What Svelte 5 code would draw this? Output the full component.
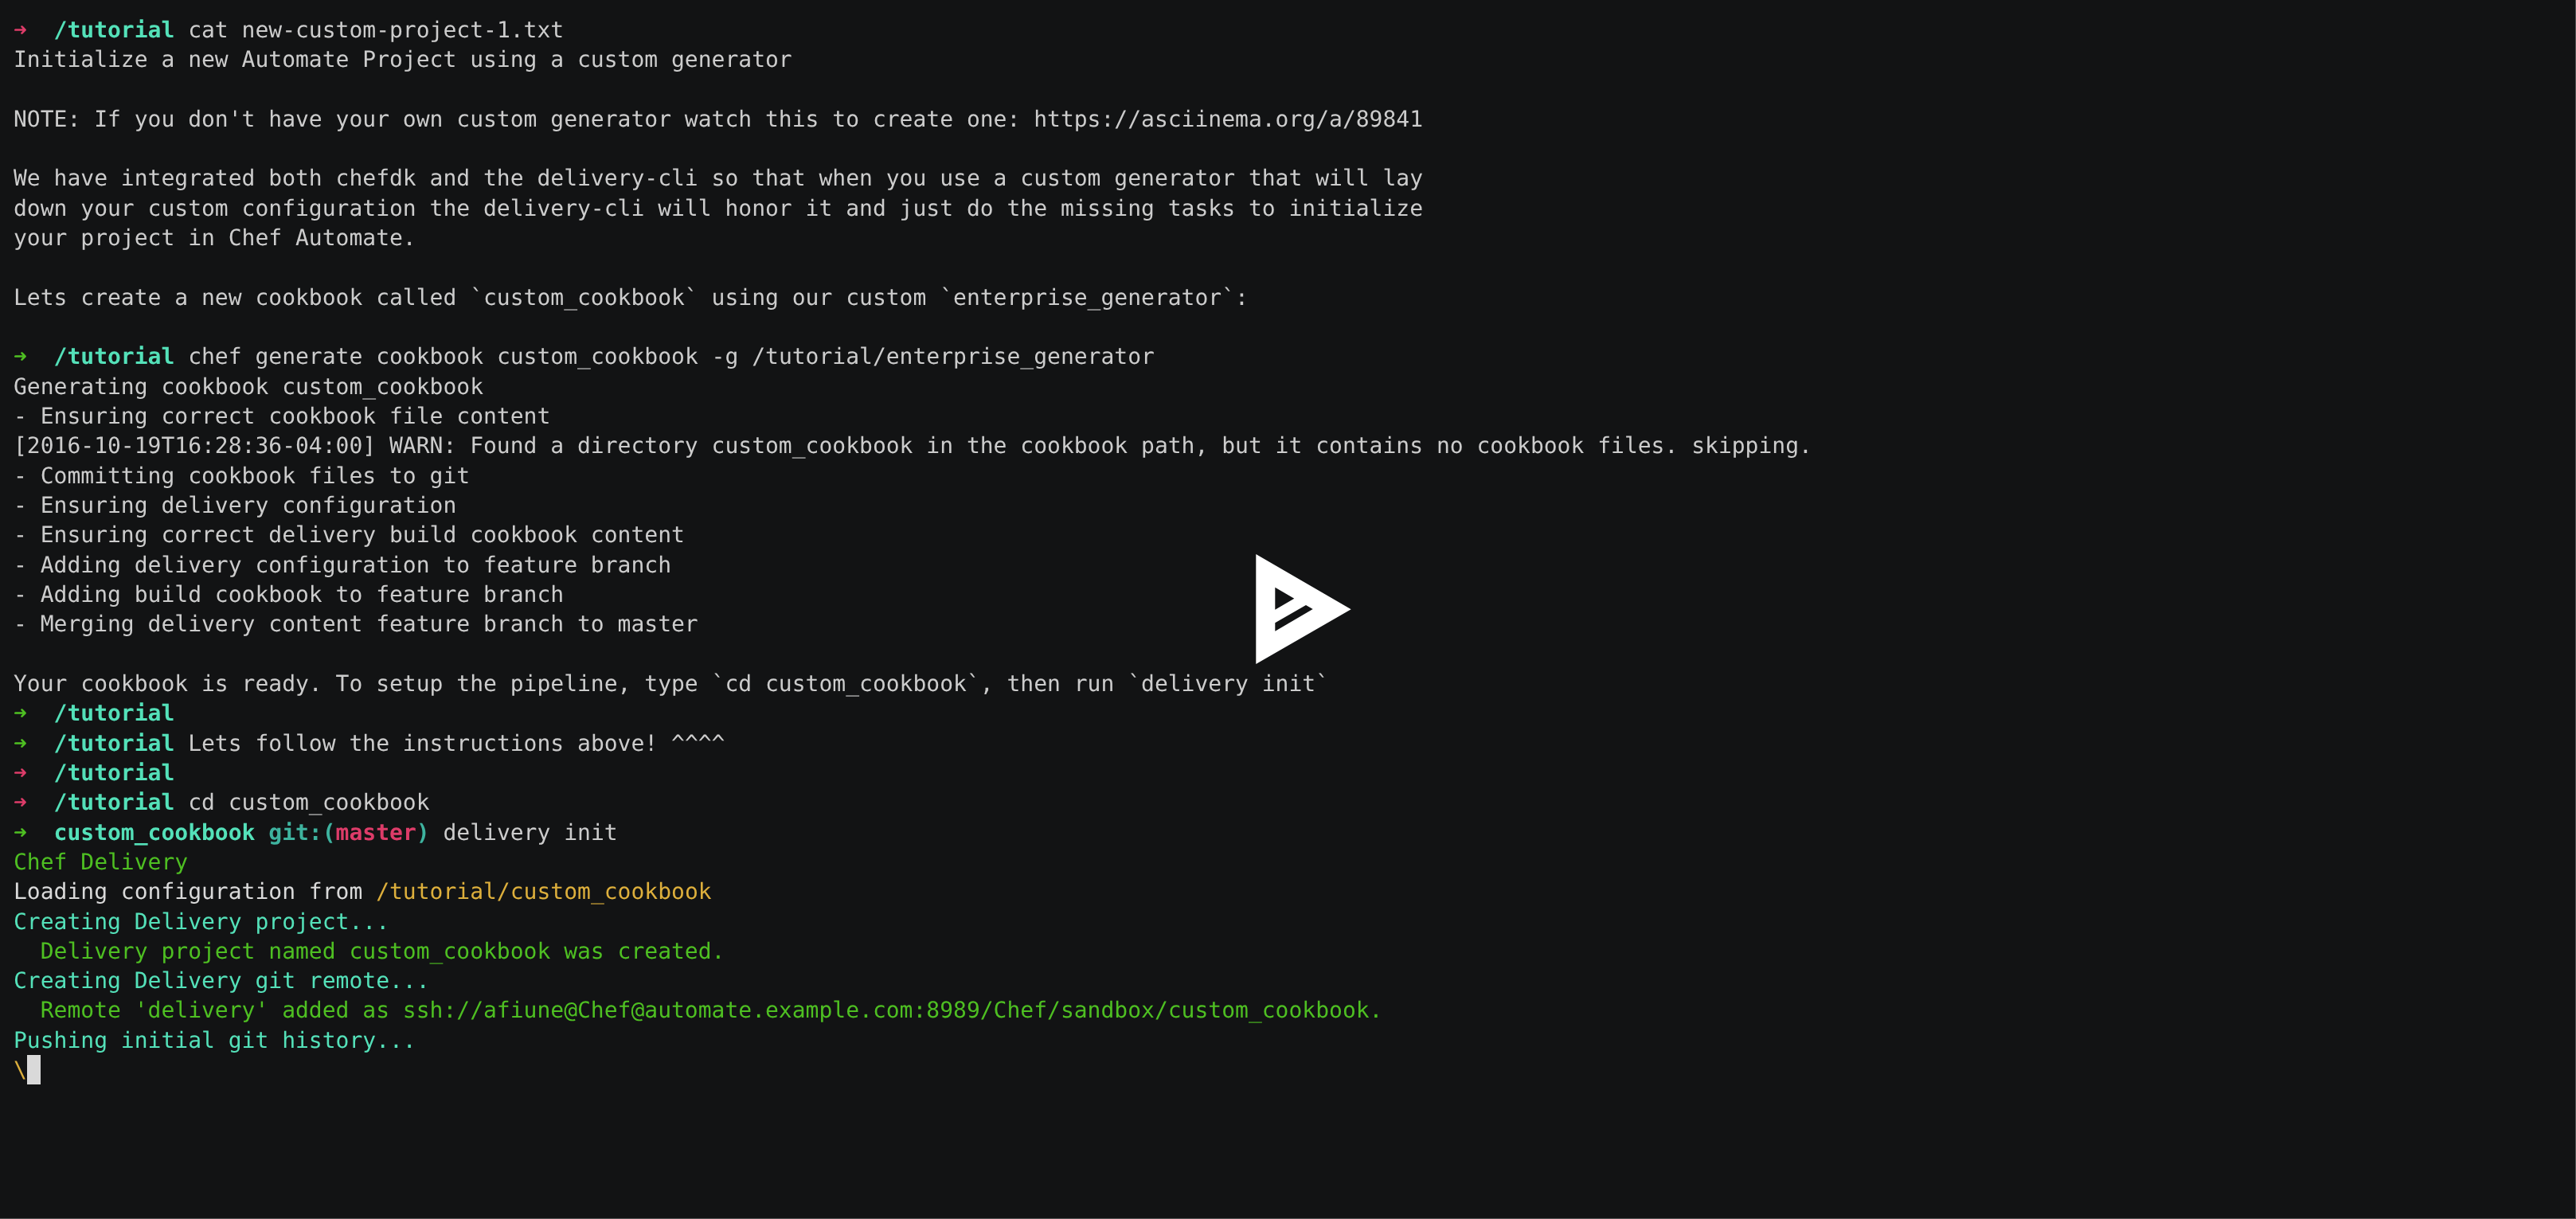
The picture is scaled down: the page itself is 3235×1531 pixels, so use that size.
<script>
  const cyan = 'c';
  const prompt = (ok, rest) => [
    [ok ? 'arrow-ok' : 'arrow-bad', '➜  '],
    ['path', '/tutorial'],
    ['', rest ? ' ' + rest : ''],
  ];
  const txt = (s) => [['', s]];

  const lines = [
    prompt(false, 'cat new-custom-project-1.txt'),
    txt('Initialize a new Automate Project using a custom generator'),
    txt(''),
    txt("NOTE: If you don't have your own custom generator watch this to create one: https://asciinema.org/a/89841"),
    txt(''),
    txt('We have integrated both chefdk and the delivery-cli so that when you use a custom generator that will lay'),
    txt('down your custom configuration the delivery-cli will honor it and just do the missing tasks to initialize'),
    txt('your project in Chef Automate.'),
    txt(''),
    txt('Lets create a new cookbook called `custom_cookbook` using our custom `enterprise_generator`:'),
    txt(''),
    prompt(true, 'chef generate cookbook custom_cookbook -g /tutorial/enterprise_generator'),
    txt('Generating cookbook custom_cookbook'),
    txt('- Ensuring correct cookbook file content'),
    txt('[2016-10-19T16:28:36-04:00] WARN: Found a directory custom_cookbook in the cookbook path, but it contains no cookbook files. skipping.'),
    txt('- Committing cookbook files to git'),
    txt('- Ensuring delivery configuration'),
    txt('- Ensuring correct delivery build cookbook content'),
    txt('- Adding delivery configuration to feature branch'),
    txt('- Adding build cookbook to feature branch'),
    txt('- Merging delivery content feature branch to master'),
    txt(''),
    txt('Your cookbook is ready. To setup the pipeline, type `cd custom_cookbook`, then run `delivery init`'),
    prompt(true, ''),
    prompt(true, 'Lets follow the instructions above! ^^^^'),
    prompt(false, ''),
    prompt(false, 'cd custom_cookbook'),
    [
      ['arrow-ok', '➜  '],
      ['path', 'custom_cookbook '],
      ['git', 'git:('],
      ['branch', 'master'],
      ['git', ')'],
      ['', ' delivery init'],
    ],
    [['green', 'Chef Delivery']],
    [['white', 'Loading configuration from '], ['yellow', '/tutorial/custom_cookbook']],
    [[cyan, 'Creating Delivery project...']],
    [['green', '  Delivery project named custom_cookbook was created.']],
    [[cyan, 'Creating Delivery git remote...']],
    [['green', "  Remote 'delivery' added as ssh://afiune@Chef@automate.example.com:8989/Chef/sandbox/custom_cookbook."]],
    [[cyan, 'Pushing initial git history...']],
    [['yellow', '\\'], ['cursor', ' ']],
  ];
</script>

<div class="player">
  <div class="term">
    {#each lines as line}
      <div class="line">{#each line as [cls, text]}<span class={cls}>{text}</span>{/each}</div>
    {/each}
  </div>
  <svg class="play" viewBox="1577 696 120 138" aria-label="Play">
    <path
      fill-rule="evenodd"
      d="M1577.3 696 L1696.7 765.3 L1577.3 834 Z M1601.3 737.7 L1601.3 765.7 L1625.3 751.7 Z M1640 760 L1601.3 782.3 L1601.3 792.7 L1648.7 765 Z"
    />
  </svg>
</div>

<style>
  :global(body) {
    margin: 0;
    background: #121314;
  }

  .player {
    position: relative;
    box-sizing: border-box;
    width: 3235px;
    height: 1531px;
    background: #121314;
    border-right: 1px solid #555;
    border-bottom: 1px solid #555;
    overflow: hidden;
  }

  .term {
    padding: 18.67px 0 0 17px;
    font-family: "DejaVu Sans Mono", monospace;
    font-size: 28px;
    line-height: 37.33px;
    color: #cccccc;
    white-space: pre;
    text-rendering: geometricPrecision;
    will-change: transform;
  }

  .line {
    height: 37.33px;
  }

  .arrow-ok {
    color: #4ebf22;
    font-weight: bold;
  }

  .arrow-bad,
  .branch {
    color: #dd3c69;
    font-weight: bold;
  }

  .path {
    color: #54e1b9;
    font-weight: bold;
  }

  .git {
    color: #3eb39f;
    font-weight: bold;
  }

  .green { color: #4ebf22; }
  .yellow { color: #ddaf3c; }
  .c { color: #54e1b9; }
  .white { color: #d9d9d9; }

  .cursor {
    display: inline-block;
    height: 37.33px;
    vertical-align: top;
    background: #d9d9d9;
  }

  .play {
    position: absolute;
    left: 1577px;
    top: 696px;
    width: 120px;
    height: 138px;
    fill: #fff;
  }
</style>
